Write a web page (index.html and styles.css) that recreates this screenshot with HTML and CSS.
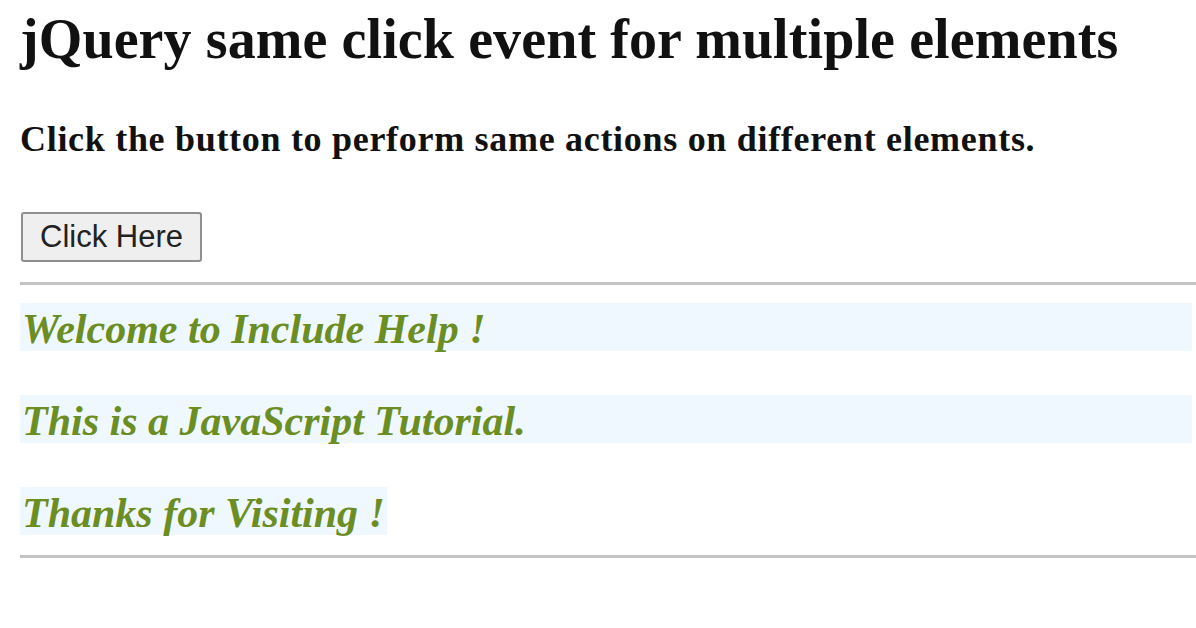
FILE: index.html
```html
<!DOCTYPE html>
<html>
<head>
<meta charset="utf-8">
<link rel="stylesheet" href="styles.css">
</head>
<body>
<h1 class="title">jQuery same click event for multiple elements</h1>
<p class="intro">Click the button to perform same actions on different elements.</p>
<button class="btn">Click Here</button>
<hr class="rule">
<div class="msg">Welcome to Include Help !</div>
<div class="msg">This is a JavaScript Tutorial.</div>
<div class="msg-wrap"><span class="msg msg-inline">Thanks for Visiting !</span></div>
<hr class="rule rule-end">
</body>
</html>
```
FILE: styles.css
```css
html, body { background: #fff; }
body {
  margin: 0;
  padding: 0 0 0 20px;
  font-family: "Liberation Serif", "Times New Roman", serif;
  color: #111;
}
.title {
  margin: 0;
  padding-top: 9px;
  font-size: 56px;
  line-height: 60px;
  font-weight: bold;
  letter-spacing: 0.1px;
}
.intro {
  margin: 0;
  padding-top: 50px;
  font-size: 36px;
  line-height: 40px;
  font-weight: bold;
  letter-spacing: 0.7px;
}
.btn {
  display: block;
  margin: 53px 0 0 1px;
  width: 181px;
  height: 50px;
  padding: 0;
  font-family: "Liberation Sans", Arial, sans-serif;
  font-size: 31px;
  color: #222;
  background: #efefef;
  border: 2px solid #8f8f8f;
  border-radius: 3px;
}
.rule {
  margin: 20px 0 0 0;
  border: 0;
  height: 3px;
  background: #c4c4c4;
}
.msg {
  margin-top: 44px;
  margin-right: 4px;
  height: 48px;
  line-height: 52px;
  background: #f0f8ff;
  color: #6b8e23;
  font-style: italic;
  font-weight: bold;
  font-size: 42px;
  padding-left: 2px;
}
.rule + .msg { margin-top: 18px; }
.msg-wrap { margin-top: 44px; height: 48px; }
.msg-inline { display: inline-block; margin: 0; padding-right: 2px; vertical-align: top; }
.rule-end { margin-top: 20px; }
```
